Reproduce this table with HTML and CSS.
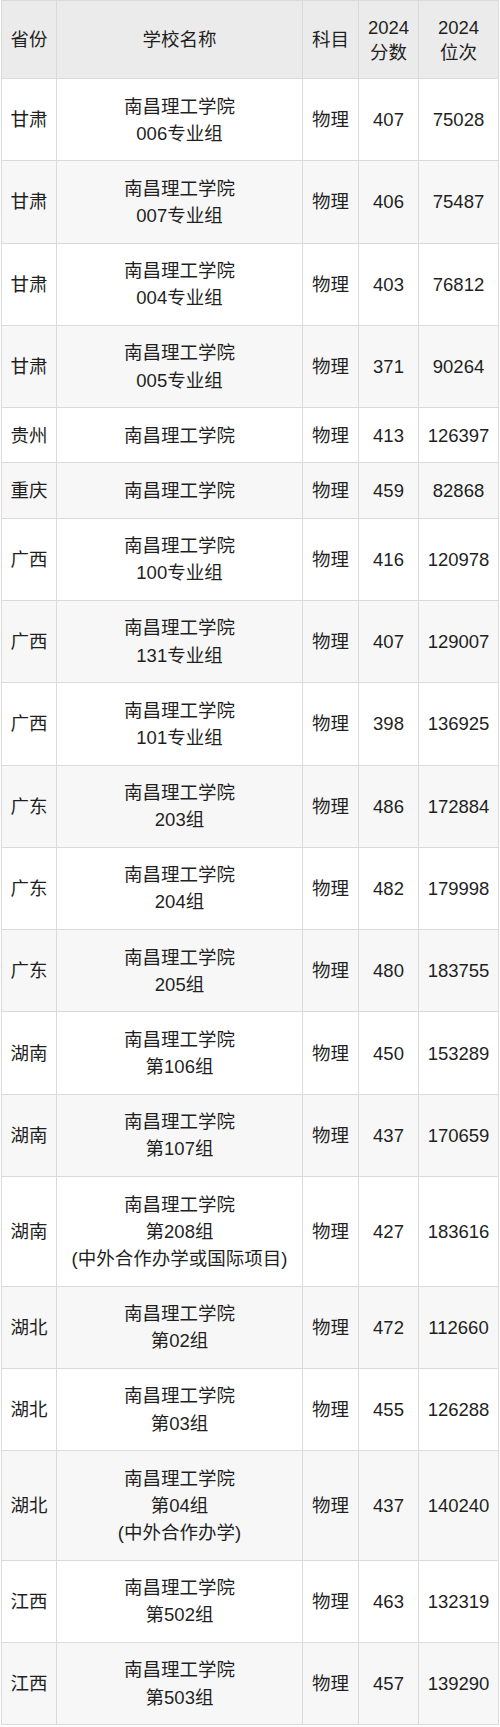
FILE: index.html
```html
<!DOCTYPE html>
<html lang="zh">
<head>
<meta charset="utf-8">
<link rel="stylesheet" href="styles.css">
</head>
<body>
<div class="wrap">
<table class="score-table">
<colgroup>
<col class="c-prov"><col class="c-school"><col class="c-subj"><col class="c-score"><col class="c-rank">
</colgroup>
<thead>
<tr><th>省份</th><th>学校名称</th><th>科目</th><th>2024<br>分数</th><th>2024<br>位次</th></tr>
</thead>
<tbody>
<tr><td>甘肃</td><td>南昌理工学院<br>006专业组</td><td>物理</td><td>407</td><td>75028</td></tr>
<tr><td>甘肃</td><td>南昌理工学院<br>007专业组</td><td>物理</td><td>406</td><td>75487</td></tr>
<tr><td>甘肃</td><td>南昌理工学院<br>004专业组</td><td>物理</td><td>403</td><td>76812</td></tr>
<tr><td>甘肃</td><td>南昌理工学院<br>005专业组</td><td>物理</td><td>371</td><td>90264</td></tr>
<tr><td>贵州</td><td>南昌理工学院</td><td>物理</td><td>413</td><td>126397</td></tr>
<tr><td>重庆</td><td>南昌理工学院</td><td>物理</td><td>459</td><td>82868</td></tr>
<tr><td>广西</td><td>南昌理工学院<br>100专业组</td><td>物理</td><td>416</td><td>120978</td></tr>
<tr><td>广西</td><td>南昌理工学院<br>131专业组</td><td>物理</td><td>407</td><td>129007</td></tr>
<tr><td>广西</td><td>南昌理工学院<br>101专业组</td><td>物理</td><td>398</td><td>136925</td></tr>
<tr><td>广东</td><td>南昌理工学院<br>203组</td><td>物理</td><td>486</td><td>172884</td></tr>
<tr><td>广东</td><td>南昌理工学院<br>204组</td><td>物理</td><td>482</td><td>179998</td></tr>
<tr><td>广东</td><td>南昌理工学院<br>205组</td><td>物理</td><td>480</td><td>183755</td></tr>
<tr><td>湖南</td><td>南昌理工学院<br>第106组</td><td>物理</td><td>450</td><td>153289</td></tr>
<tr><td>湖南</td><td>南昌理工学院<br>第107组</td><td>物理</td><td>437</td><td>170659</td></tr>
<tr><td>湖南</td><td>南昌理工学院<br>第208组<br>(中外合作办学或国际项目)</td><td>物理</td><td>427</td><td>183616</td></tr>
<tr><td>湖北</td><td>南昌理工学院<br>第02组</td><td>物理</td><td>472</td><td>112660</td></tr>
<tr><td>湖北</td><td>南昌理工学院<br>第03组</td><td>物理</td><td>455</td><td>126288</td></tr>
<tr><td>湖北</td><td>南昌理工学院<br>第04组<br>(中外合作办学)</td><td>物理</td><td>437</td><td>140240</td></tr>
<tr><td>江西</td><td>南昌理工学院<br>第502组</td><td>物理</td><td>463</td><td>132319</td></tr>
<tr><td>江西</td><td>南昌理工学院<br>第503组</td><td>物理</td><td>457</td><td>139290</td></tr>
</tbody>
</table>
</div>
</body>
</html>
```
FILE: styles.css
```css
html, body {
  margin: 0;
  padding: 0;
  background: #ffffff;
}
.wrap {
  padding: 0 2px 0 1px;
}
.score-table {
  width: 497px;
  table-layout: fixed;
  border-collapse: collapse;
  font-family: "Liberation Sans", "Noto Sans CJK SC", sans-serif;
  font-size: 18.5px;
  color: #1f1f1f;
}
.c-prov { width: 55px; }
.c-school { width: 246px; }
.c-subj { width: 56px; }
.c-score { width: 60px; }
.c-rank { width: 80px; }
.score-table th,
.score-table td {
  border: 1px solid #dadada;
  text-align: center;
  vertical-align: middle;
  padding: 13.5px 0;
  white-space: nowrap;
}
.score-table th {
  background: #ebebeb;
  font-weight: normal;
  line-height: 25px;
}
.score-table td {
  line-height: 27.15px;
}
.score-table tbody tr:nth-child(even) td {
  background: #f7f7f7;
}
```
